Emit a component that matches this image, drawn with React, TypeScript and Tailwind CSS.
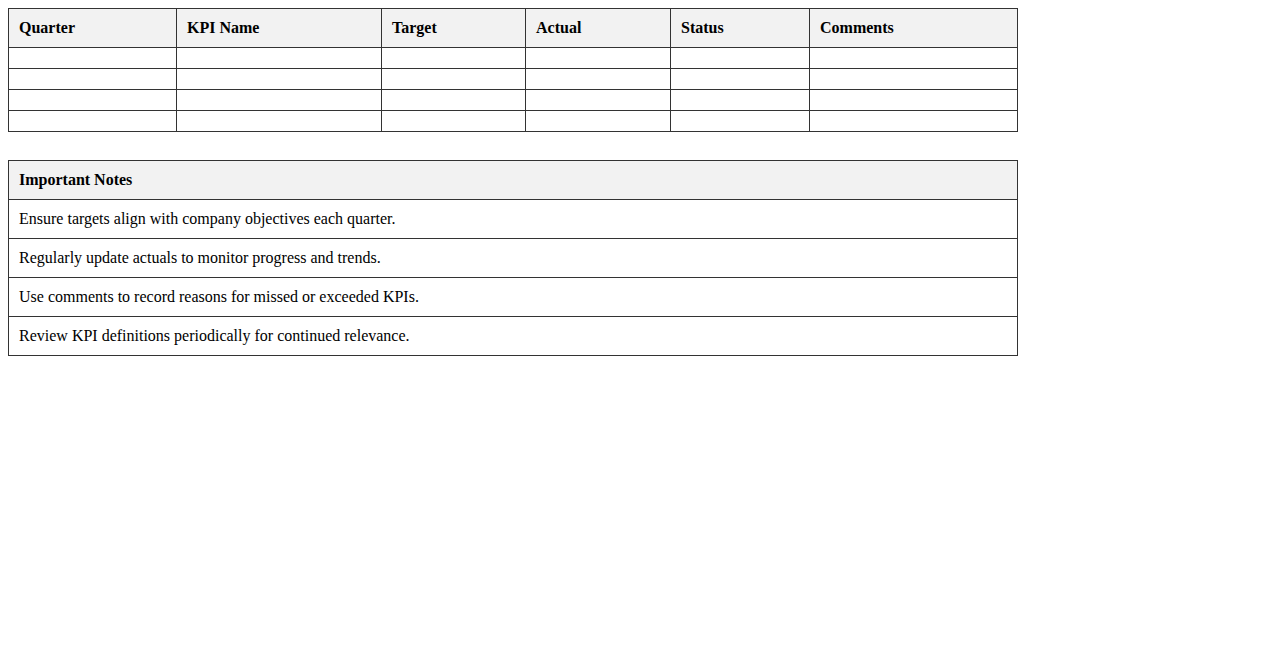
import React from "react";

const headers = ["Quarter", "KPI Name", "Target", "Actual", "Status", "Comments"];
const colClasses = ["w-[168px]", "w-[205px]", "w-[144px]", "w-[145px]", "w-[139px]", "w-[208px]"];
const notes = [
  "Ensure targets align with company objectives each quarter.",
  "Regularly update actuals to monitor progress and trends.",
  "Use comments to record reasons for missed or exceeded KPIs.",
  "Review KPI definitions periodically for continued relevance.",
];

export default function App() {
  return (
    <div
      className="p-2 bg-white text-black text-[16px] leading-[normal] min-h-[650px]"
      style={{ fontFamily: '"Liberation Serif", "Times New Roman", serif' }}
    >
      <table className="w-[1010px] border-collapse table-fixed">
        <colgroup>
          {colClasses.map((c, i) => (
            <col key={i} className={c} />
          ))}
        </colgroup>
        <thead>
          <tr>
            {headers.map((h) => (
              <th
                key={h}
                className="border border-[#333] bg-[#f2f2f2] p-[10px] text-left font-bold"
              >
                {h}
              </th>
            ))}
          </tr>
        </thead>
        <tbody>
          {[0, 1, 2, 3].map((r) => (
            <tr key={r}>
              {headers.map((h) => (
                <td key={h} className="border border-[#333] p-[10px]"></td>
              ))}
            </tr>
          ))}
        </tbody>
      </table>
      <table className="w-[1010px] border-collapse mt-[28px]">
        <thead>
          <tr>
            <th className="border border-[#333] bg-[#f2f2f2] p-[10px] text-left font-bold">
              Important Notes
            </th>
          </tr>
        </thead>
        <tbody>
          {notes.map((n) => (
            <tr key={n}>
              <td className="border border-[#333] p-[10px]">{n}</td>
            </tr>
          ))}
        </tbody>
      </table>
    </div>
  );
}
